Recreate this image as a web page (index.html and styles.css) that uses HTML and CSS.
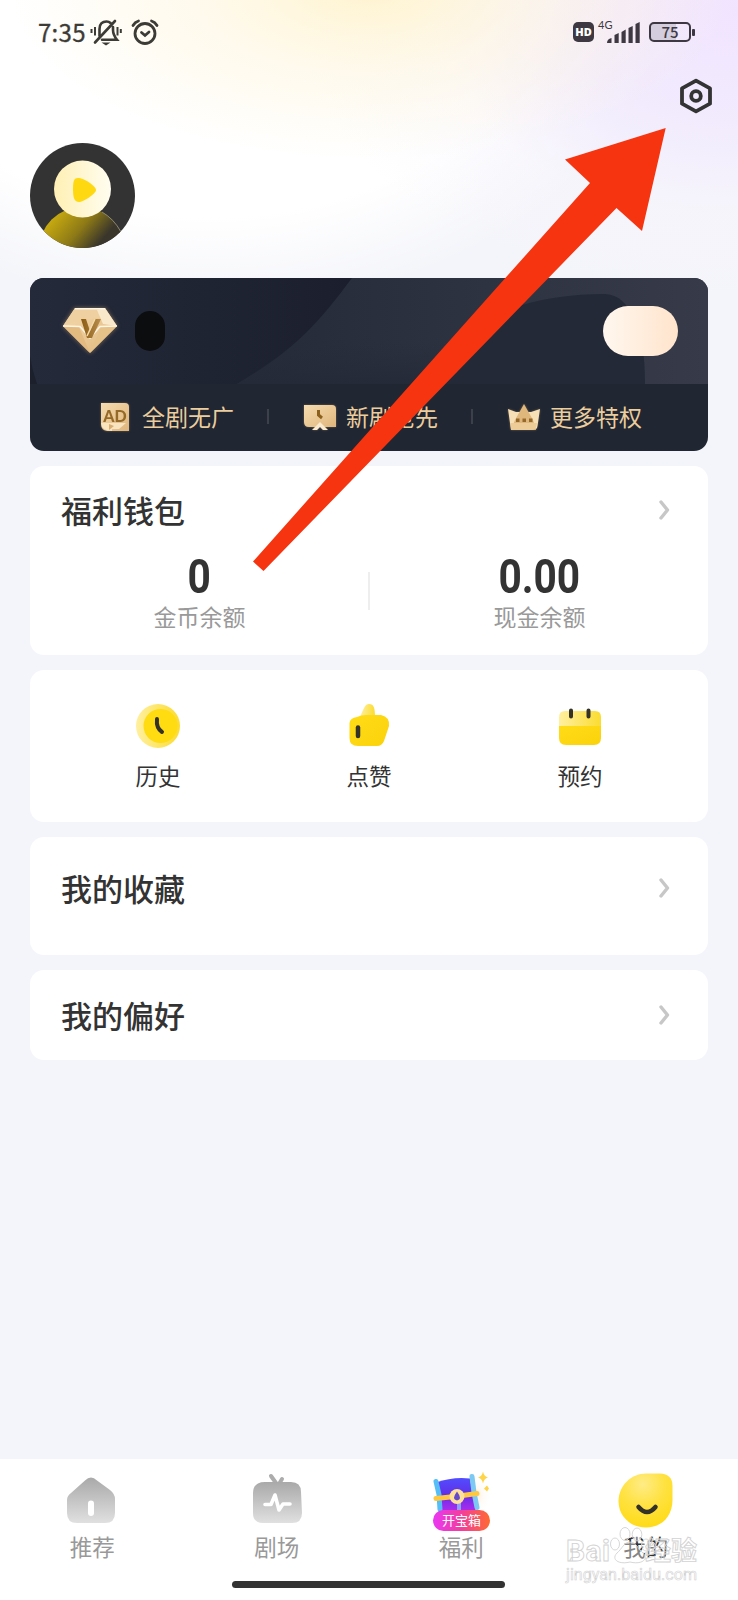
FILE: index.html
```
<!DOCTYPE html>
<html lang="zh-CN">
<head>
<meta charset="utf-8">
<title>我的</title>
<link rel="stylesheet" href="styles.css">
</head>
<body>
<svg width="0" height="0" class="defs">
  <defs>
    <linearGradient id="gold" x1="0" y1="0" x2="1" y2="1"><stop offset="0" stop-color="#f6dcb0"/><stop offset="1" stop-color="#dfb57b"/></linearGradient>
    <linearGradient id="brown" x1="0" y1="0" x2="1" y2="0"><stop offset="0" stop-color="#8a5c12"/><stop offset="1" stop-color="#b98d4e"/></linearGradient>
    <linearGradient id="pale" x1="0" y1="0" x2="1" y2="0"><stop offset="0" stop-color="#fff0a0"/><stop offset="1" stop-color="#fbdc30"/></linearGradient>
    <linearGradient id="sun" x1="0" y1="0" x2="1" y2="1"><stop offset="0" stop-color="#ffdc17"/><stop offset="1" stop-color="#fbd20c"/></linearGradient>
    <linearGradient id="grey" x1="0" y1="0" x2="0" y2="1"><stop offset="0" stop-color="#a9a9a9"/><stop offset="1" stop-color="#e0e0e0"/></linearGradient>
  </defs>
</svg>
<div class="screen">
  <header class="status">
    <span class="time">7:35</span>
    <svg class="bell" width="32" height="28" viewBox="0 0 32 28" fill="none" stroke="#3d3b36" stroke-width="2.6">
      <path d="M9.500 18V11C9.500 5.500 12.500 3.500 16.500 3.500Q19 3.500 20.500 5M23 9V12C23 16 24 18 27 21.800H12M5 24.500L25 3" stroke-linecap="round"/>
      <path d="M11.500 24.500H20.500L16 27.500Z" fill="#3d3b36" stroke="none"/>
      <path d="M1.500 11V15M5 9V17.500M27.500 9V17.500M30.800 11V15" stroke-width="2"/>
    </svg>
    <svg class="alarm" width="28" height="26" viewBox="0 0 28 26" fill="none" stroke="#3d3b36" stroke-width="2.800" stroke-linecap="round">
      <circle cx="14" cy="14.500" r="10"/><path d="M10.500 13.500L14 16.500L18 13M2 6.500Q4 3 7.500 2M26 6.500Q24 3 20.500 2"/>
    </svg>
    <span class="gap"></span>
    <span class="hd">HD</span>
    <span class="net">4G</span>
    <svg class="bars" width="33" height="21" viewBox="0 0 33 21" fill="#3e3843"><path d="M0 21Q0 17 4.500 16V21ZM7.500 21V13L11.700 11V21ZM14.500 21V10L18.700 7.500V21ZM21.500 21V6L25.700 4V21ZM28.500 21V2L32.700 0V21Z"/></svg>
    <span class="battery">75</span><i class="nub"></i>
  </header>
  <div class="toolbar">
    <svg width="34" height="36" viewBox="0 0 34 36" fill="none" stroke="#333" stroke-width="3.800" stroke-linejoin="round"><path d="M17 2.600L31 10.300V25.700L17 33.400L3 25.700V10.300Z"/><circle cx="17" cy="18" r="4.800"/></svg>
  </div>
  <div class="profile">
    <svg width="105" height="105" viewBox="0 0 105 105">
      <defs>
        <linearGradient id="body" x1="0.1" y1="0.2" x2="0.8" y2="0.8"><stop offset="0" stop-color="#c6a90f"/><stop offset=".35" stop-color="#8e7a16"/><stop offset=".65" stop-color="#3a362b"/></linearGradient>
        <linearGradient id="face" x1="0" y1="0" x2="1" y2="0"><stop offset="0" stop-color="#fff0b4"/><stop offset="1" stop-color="#fffdf0"/></linearGradient>
        <clipPath id="round"><circle cx="52.500" cy="52.500" r="52.500"/></clipPath>
      </defs>
      <g clip-path="url(#round)"><rect width="105" height="105" fill="#333"/><circle cx="52" cy="107" r="43" fill="url(#body)"/><path d="M72 69Q84 76 91 89" fill="none" stroke="#8b8772"/></g>
      <circle cx="52.500" cy="46" r="28.500" fill="url(#face)"/>
      <path d="M48 35C44 35 43 38 43 46S44 59 49 59C53 59 66 51 66 47S54 35 48 35Z" fill="#fed912"/>
    </svg>
  </div>
  <main class="cards">
    <section class="vip">
      <svg class="waves" width="678" height="106" viewBox="0 0 678 106">
        <defs>
          <linearGradient id="w1"><stop offset="0" stop-color="#242a3a"/><stop offset="1" stop-color="#1b1f2d"/></linearGradient>
          <linearGradient id="w2"><stop offset="0" stop-color="#242a38"/><stop offset="1" stop-color="#373b49"/></linearGradient>
          <linearGradient id="w3" x1="0" y1="0" x2="0" y2="1"><stop offset="0" stop-color="#262c3a" stop-opacity="0"/><stop offset="1" stop-color="#242a38"/></linearGradient>
        </defs>
        <path d="M0 0H322V106H0Z" fill="url(#w1)"/>
        <path d="M0 78Q2 92 7 106H0Z" fill="#1b202c"/>
        <path d="M322 0H678V106H207C260 75 285 50 322 0Z" fill="url(#w2)"/>
        <path d="M207 106C230 92 250 78 266 64H420V106Z" fill="url(#w3)"/>
        <path d="M380 106L440 48C485 24 530 16 575 16C590 17 597 26 603 40Q615 60 615 106Z" fill="#232936"/>
      </svg>
      <div class="vip-top">
        <svg class="diamond" width="62" height="54" viewBox="-4 -4 62 54">
          <path d="M12 0H42L54 18L27 45L0 18Z" fill="url(#gold)"/>
          <path d="M12 0H42L40 9L12 14L0 18Z" fill="#efd0a0"/>
          <path d="M42 0L54 18L40 16L34 2Z" fill="#f9e8ca"/>
          <path d="M27 45L16 19L0 18Z" fill="#e3ba7f"/><path d="M27 45L38 19L54 18Z" fill="#e6c288"/>
          <path d="M12 .7H42M0 18L17 18.500L27 30L37 18.500L54 18" fill="none" stroke="#fff5e5" stroke-width="1.500"/>
          <path d="M18 11H23L27 23L32 11H38L29 30H24Z" fill="url(#brown)"/>
          <path d="M24 28L32 11" stroke="#f5dbaa" stroke-width="1.500"/>
        </svg>
        <span class="mask"></span>
        <span class="gap"></span>
        <span class="pill"></span>
      </div>
      <div class="perks">
        <span class="perk"><svg width="32" height="30" viewBox="0 0 32 30"><path d="M1 1H25Q29 1 29 5V29H7Q1 28 1 22Z" fill="url(#gold)"/><text x="15" y="19.500" class="ad">AD</text><path d="M1 21H26L19 27H12V29Q2 29 1 21Z" fill="#f8e4bf"/><path d="M9 22V28L14 24Z" fill="#d8ad70"/></svg>全剧无广</span>
        <i></i>
        <span class="perk"><svg width="32" height="30" viewBox="0 0 32 30"><path d="M0 3H28Q32 3 32 7V25H5Q0 25 0 20Z" fill="url(#gold)"/><path d="M14.500 8V13L18 16" fill="none" stroke="#8c601d" stroke-width="3"/><path d="M8 28L16 20L24 28H19L16 25L13 28Z" fill="#faebd0"/></svg>新剧抢先</span>
        <i></i>
        <span class="perk"><svg width="32" height="30" viewBox="0 0 32 30"><path d="M0 7L8 10H23L32 7L29.500 24Q29 28 25 28H3Z" fill="#f7dfb6"/><path d="M3 28L7 18L16 2L25 18L28 28Z" fill="#dfb67b"/><path d="M2.500 21H29L28 25Q27 28 24 28H3Z" fill="#edcc98"/><path d="M8 16.500H11.500V20H8ZM14.500 16.500H18V20H14.500ZM21 16.500H24.500V20H21Z" fill="#96682a"/></svg>更多特权</span>
      </div>
    </section>
    <section class="card wallet">
      <div class="row"><h2>福利钱包</h2><svg class="chev" width="12" height="20" viewBox="0 0 12 20"><path d="M2 2L8.500 10L2 18"/></svg></div>
      <div class="balances">
        <div><b>0</b><span>金币余额</span></div>
        <i></i>
        <div><b>0.00</b><span>现金余额</span></div>
      </div>
    </section>
    <section class="card actions">
      <div><svg width="46" height="46" viewBox="0 0 46 46"><circle cx="23" cy="23" r="22" fill="url(#pale)"/><circle cx="25.500" cy="23" r="17" fill="#ffdb12"/><path d="M22 16Q21 25 27 29" fill="none" stroke="#333128" stroke-width="4" stroke-linecap="round"/></svg><span>历史</span></div>
      <div><svg width="46" height="46" viewBox="0 0 46 46"><path d="M14 14C18 5 19 1 23 1C28 1 29 5 29 14Z" fill="url(#pale)"/><path d="M3.500 20Q4 15 11 14Q15 12 20 12H35Q44 14 43 23L38 38Q36 43 31 43H12Q3.500 43 3.500 35Z" fill="url(#sun)"/><path d="M12 24.500V33" stroke="#333128" stroke-width="4.500" stroke-linecap="round"/></svg><span>点赞</span></div>
      <div><svg width="46" height="46" viewBox="0 0 46 46"><path d="M2 14Q2 8 8 8H38Q44 8 44 14V26H2Z" fill="url(#pale)"/><path d="M2 23H44V35Q44 42 37 42H9Q2 42 2 35Z" fill="url(#sun)"/><path d="M14 7.500V13.500M31.500 7.500V13.500" stroke="#333128" stroke-width="4" stroke-linecap="round"/></svg><span>预约</span></div>
    </section>
    <section class="card favorites">
      <div class="row"><h2>我的收藏</h2><svg class="chev" width="12" height="20" viewBox="0 0 12 20"><path d="M2 2L8.500 10L2 18"/></svg></div>
    </section>
    <section class="card preferences">
      <div class="row"><h2>我的偏好</h2><svg class="chev" width="12" height="20" viewBox="0 0 12 20"><path d="M2 2L8.500 10L2 18"/></svg></div>
    </section>
  </main>
  <nav class="tabs">
    <div class="tab-list">
      <a><svg width="64" height="60" viewBox="0 0 64 60"><path d="M7 27Q7 23 11 20L25 7.500Q31 1.500 37 7.500L50 17Q55 21 55 26V40Q55 50 45 50H17Q7 50 7 40Z" fill="url(#grey)"/><path d="M31 30.500V40" stroke="#fff" stroke-width="6" stroke-linecap="round"/></svg><span>推荐</span></a>
      <a><svg width="64" height="60" viewBox="0 0 64 60"><path d="M26 3L31 10M37 6L34 11" stroke="#acacac" stroke-width="4" stroke-linecap="round"/><path d="M20 9H46Q56 9 56 19L57 40Q57 50 47 50H18Q8 50 8 40V20Q8 9 20 9Z" fill="url(#grey)"/><path d="M20 31.500H26L30 22L34 37L38 31H45" fill="none" stroke="#fff" stroke-width="3.600" stroke-linecap="round" stroke-linejoin="round"/></svg><span>剧场</span></a>
      <a><svg width="64" height="60" viewBox="0 0 64 60">
        <defs><linearGradient id="badge"><stop offset="0" stop-color="#e937f4"/><stop offset=".5" stop-color="#f23e9d"/><stop offset="1" stop-color="#ff6a2f"/></linearGradient><linearGradient id="chest" x2="0" y2="1"><stop offset="0" stop-color="#514dff"/><stop offset=".5" stop-color="#612fe8"/><stop offset="1" stop-color="#b22bed"/></linearGradient><radialGradient id="glow"><stop offset="0" stop-color="#ffe8ce"/><stop offset="1" stop-color="#fff" stop-opacity="0"/></radialGradient></defs>
        <g transform="translate(-1 -.5)">
        <circle cx="45" cy="23" r="19" fill="url(#glow)"/>
        <path d="M8 10Q25 4 42 6L48 39H13Z" fill="url(#chest)"/>
        <path d="M8 9L11 22L12 37" fill="none" stroke="#55bef5" stroke-width="5" stroke-linecap="round"/><path d="M44 4L46 20L49 35" fill="none" stroke="#7cc9f4" stroke-width="5" stroke-linecap="round"/>
        <path d="M31 26V38" stroke="#8da0fb" stroke-width="4"/><path d="M8 26L27 24L49 21" fill="none" stroke="#ffc842" stroke-width="5" stroke-linecap="round"/>
        <circle cx="29" cy="24" r="7.500" fill="#ffe09a"/><path d="M29 19Q35 27 29 28Q23 27 29 19" fill="#644acb"/>
        <path d="M55 -1Q56 4 60 5Q56 6 55 11Q54 6 50 5Q54 4 55 -1ZM59 13L61 16L59 19L56 16Z" fill="#ffd449"/>
        <rect x="5" y="37.500" width="57" height="21" rx="10.500" fill="url(#badge)"/><text x="33.500" y="52.500" class="badge">开宝箱</text>
        </g>
      </svg><span>福利</span></a>
      <a class="active"><svg width="64" height="60" viewBox="0 0 64 60"><defs><radialGradient id="smile" cx=".45" cy=".2" r=".8"><stop offset="0" stop-color="#ffec86"/><stop offset=".5" stop-color="#ffe242"/><stop offset="1" stop-color="#ffdb17"/></radialGradient></defs><path d="M32 .5H46Q58.500 1 58.500 13V27C58.500 43 48 54.500 32 54.500S4.500 43 4.500 28S17 .5 32 .5Z" fill="url(#smile)"/><path d="M24.500 34Q33 44 41.500 34" fill="none" stroke="#333128" stroke-width="4.500" stroke-linecap="round"/></svg><span>我的</span></a>
    </div>
    <div class="home-bar"></div>
  </nav>
  <svg class="watermark" width="150" height="70" viewBox="0 0 150 70">
    <g fill="#fff" fill-opacity=".4" stroke="#d2d2d2" stroke-width=".9">
      <text x="5" y="41" class="wm-latin" textLength="44">Bai</text>
      <ellipse cx="54" cy="24" rx="4.500" ry="6"/><ellipse cx="64" cy="14" rx="5" ry="6.500"/><ellipse cx="76" cy="14.500" rx="4.800" ry="6.500"/><ellipse cx="85" cy="25" rx="4.500" ry="6"/>
      <path d="M69 22C75 22 77 29 82 33C88 39 81 45 69 42C57 45 50 39 56 33C61 29 63 22 69 22Z"/>
      <text x="84" y="39.500" class="wm-cn">经验</text>
      <text x="5" y="60" class="wm-url" textLength="131">jingyan.baidu.com</text>
    </g>
  </svg>
  <svg class="arrow" width="738" height="600" viewBox="0 0 738 600"><path d="M665.700 128L565 159.500L590 183L253 561.500L263.500 571L616.500 208L642 231Z" fill="#f6340f"/></svg>
</div>
</body>
</html>
```
FILE: styles.css
```
* { box-sizing: border-box; }
body { margin: 0; }
.defs { display: block; }
.screen {
  position: relative; display: flex; flex-direction: column;
  width: 738px; height: 1600px; overflow: hidden; color: #333;
  font-family: "Noto Sans CJK SC", sans-serif;
  background:
    radial-gradient(ellipse 360px 170px at 370px -10px, rgba(255,243,204,.9) 0, rgba(255,246,222,.6) 45%, rgba(255,250,242,0) 100%),
    radial-gradient(ellipse 440px 290px at 738px 10px, #f1e4ff 0, rgba(241,233,254,.85) 38%, rgba(248,244,253,.4) 70%, rgba(248,246,253,0) 100%),
    radial-gradient(ellipse 460px 330px at 210px -20px, #fff 0, #fff 72%, rgba(255,255,255,0) 100%),
    #f4f5fa;
}
.gap { flex: 1; }
.status { display: flex; align-items: center; height: 64px; padding: 0 43px 0 38px; color: #3d3b36; }
.time { width: 53px; font: 400 24px/30px "Noto Sans CJK SC", sans-serif; letter-spacing: .3px; -webkit-text-stroke: .3px #3d3b36; }
.bell { margin-left: -1px; }
.alarm { margin-left: 9px; margin-top: -1px; }
.hd { width: 21px; height: 20px; border-radius: 5px; background: #3e3843; color: #fff; font: 800 11px/20px "Open Sans", sans-serif; text-align: center; }
.net { width: 17px; margin: -15px 0 0 4px; color: #3e3843; font: 11px/14px Lato, sans-serif; }
.bars { margin-left: -8px; margin-right: 9px; }
.battery { width: 42px; height: 20px; border: 2px solid #3e3843; border-radius: 5px; background: linear-gradient(90deg, #d4cddd 65%, transparent 65%); font: 500 15px/16px "Noto Sans CJK SC", sans-serif; text-align: center; color: #3e3843; }
.nub { width: 3px; height: 7px; margin-left: 1px; border-radius: 1px; background: #3e3843; }
.toolbar { display: flex; justify-content: flex-end; height: 79px; padding: 14px 25px 0; }
.profile { height: 135px; padding-left: 30px; }
.cards { display: flex; flex-direction: column; gap: 15px; padding: 0 30px; flex: 1; }
.vip { position: relative; height: 173px; border-radius: 14px; overflow: hidden; background: #202632; }
.waves { position: absolute; left: 0; top: 0; }
.vip-top { position: relative; display: flex; align-items: center; height: 106px; padding: 0 30px 0 29px; }
.diamond { filter: drop-shadow(0 0 2px rgba(224,183,125,.5)); }
.mask { width: 30px; height: 40px; margin: 0 0 0 14px; border-radius: 15px; background: #0b0d0f; }
.pill { width: 75px; height: 50px; border-radius: 25px; background: linear-gradient(90deg, #fff7ef, #ffe4cc); }
.perks { position: relative; display: flex; align-items: center; justify-content: space-between; height: 64px; padding: 0 66px 0 70px; color: #eccd9d; font-size: 23px; line-height: 30px; }
.perks i { position: relative; left: -1px; width: 2px; height: 15px; background: #3b404a; }
.perk { display: flex; align-items: center; gap: 10px; }
.perk svg { position: relative; top: 1px; filter: drop-shadow(0 0 1px rgba(224,183,125,.4)); }
.ad { font: 900 16px Lato, sans-serif; text-anchor: middle; fill: #956a28; }
.card { border-radius: 14px; background: #fff; }
.row { display: flex; align-items: center; justify-content: space-between; height: 44px; padding: 0 37px 0 31px; }
h2 { margin: 0; font-size: 31px; line-height: 44px; font-weight: 500; }
.chev { fill: none; stroke: #c7c7c7; stroke-width: 3.4; stroke-linecap: round; stroke-linejoin: round; }
.wallet { height: 189px; padding-top: 22px; }
.balances { display: flex; justify-content: space-between; height: 120px; padding-top: 20px; }
.balances div { display: flex; flex: 1; flex-direction: column; align-items: center; }
.balances b { font: 700 49px/50px Roboto, sans-serif; transform: scaleX(.83); }
.balances span { margin: -1px 0 0 1px; color: #999; font-size: 23px; line-height: 30px; }
.balances i { width: 2px; height: 38px; margin-top: 20px; background: #eee; }
.actions { display: flex; justify-content: space-between; height: 152px; padding: 33px 83px 0; }
.actions div { display: flex; flex-direction: column; align-items: center; width: 90px; }
.actions span { margin-top: 11px; font-size: 22.5px; line-height: 30px; }
.favorites { height: 118px; padding-top: 29px; }
.preferences { height: 90px; padding-top: 23px; }
.tabs { height: 141px; background: #fff; }
.tab-list { display: flex; height: 122px; padding-top: 14px; }
.tab-list a { display: flex; flex: 1; flex-direction: column; align-items: center; }
.tab-list svg { overflow: visible; }
.tab-list span { margin-top: -2px; color: #999; font-size: 22.5px; line-height: 30px; }
.tab-list .active span { color: #333; }
.badge { font: 13px "Noto Sans CJK SC", sans-serif; fill: #fff; text-anchor: middle; }
.home-bar { position: relative; left: -.5px; width: 273px; height: 7px; margin: 0 auto; border-radius: 4px; background: #333; }
.watermark { position: absolute; left: 561px; top: 1520px; }
.wm-latin { font: 700 30px Roboto, sans-serif; }
.wm-cn { font: 700 26px "Noto Sans CJK SC", sans-serif; }
.wm-url { font: 16px Roboto, sans-serif; stroke-width: .6px; }
.arrow { position: absolute; left: 0; top: 0; }
```
